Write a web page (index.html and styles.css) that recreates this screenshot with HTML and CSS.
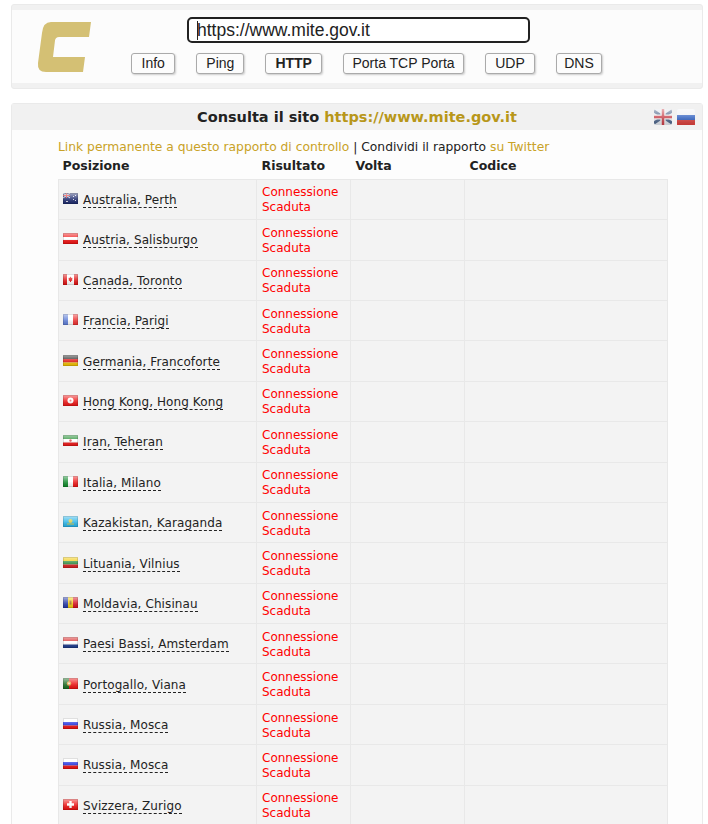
FILE: index.html
```html
<!DOCTYPE html>
<html lang="it">
<head>
  <meta charset="UTF-8">
  <meta name="viewport" content="width=device-width, initial-scale=1.0">
  <title>Consulta il sito https://www.mite.gov.it</title>
  <link rel="stylesheet" href="styles.css">
</head>
<body>
  <svg class="defs" width="0" height="0">
    <defs>
      <symbol id="f-au" viewBox="0 0 15 11"><rect width="15" height="11" fill="#1d2a6e"/><path d="M0 0l7 5M7 0L0 5" stroke="#d8dcec" stroke-width="1"/><path d="M3.500 0v5M0 2.500h7" stroke="#d33" stroke-width="1"/><path d="M10 3h1v1h-1zM12 2h1v1h-1zM12 7h1v1h-1zM10 6h1v1h-1zM3 8h2v1H3z" fill="#dde"/></symbol>
      <symbol id="f-at" viewBox="0 0 15 11"><rect width="15" height="11" fill="#f01010"/><rect y="4" width="15" height="3" fill="#fff"/></symbol>
      <symbol id="f-ca" viewBox="0 0 15 11"><rect width="15" height="11" fill="#fff"/><rect width="4" height="11" fill="#e01010"/><rect x="11" width="4" height="11" fill="#e01010"/><path d="M7.500 2.500l1 1.500 1-.3-.4 2 .6.400-1.700 1.100v.8h-1v-.8L5.300 6.100l.6-.4-.4-2 1 .3z" fill="#e01010"/></symbol>
      <symbol id="f-fr" viewBox="0 0 15 11"><rect width="15" height="11" fill="#fff"/><rect width="5" height="11" fill="#5f7fd8"/><rect x="10" width="5" height="11" fill="#ee3030"/></symbol>
      <symbol id="f-de" viewBox="0 0 15 11"><rect width="15" height="4" fill="#222"/><rect y="4" width="15" height="3.500" fill="#e01010"/><rect y="7.500" width="15" height="3.500" fill="#f2c200"/></symbol>
      <symbol id="f-hk" viewBox="0 0 15 11"><rect width="15" height="11" fill="#ee1515"/><circle cx="7.500" cy="5.500" r="3" fill="#fff"/><circle cx="7.500" cy="5.500" r="1" fill="#e66"/></symbol>
      <symbol id="f-ir" viewBox="0 0 15 11"><rect width="15" height="4" fill="#1a8a2a"/><rect y="4" width="15" height="3.500" fill="#fff"/><rect y="7.500" width="15" height="3.500" fill="#ee1515"/><circle cx="7.500" cy="5.500" r="1.200" fill="#d44"/></symbol>
      <symbol id="f-it" viewBox="0 0 15 11"><rect width="15" height="11" fill="#fff"/><rect width="5" height="11" fill="#0f8a2a"/><rect x="10" width="5" height="11" fill="#ee1515"/></symbol>
      <symbol id="f-kz" viewBox="0 0 15 11"><rect width="15" height="11" fill="#28b4e8"/><circle cx="7.500" cy="5" r="2" fill="#d8c840"/><path d="M4 7.500h7v1H4z" fill="#d8c840"/></symbol>
      <symbol id="f-lt" viewBox="0 0 15 11"><rect width="15" height="4" fill="#f2c800"/><rect y="4" width="15" height="3.500" fill="#2a8a3a"/><rect y="7.500" width="15" height="3.500" fill="#d82020"/></symbol>
      <symbol id="f-md" viewBox="0 0 15 11"><rect width="15" height="11" fill="#f2cc10"/><rect width="5" height="11" fill="#2438a8"/><rect x="10" width="5" height="11" fill="#d81020"/><rect x="6.500" y="3.500" width="2" height="4" fill="#a06a20"/></symbol>
      <symbol id="f-nl" viewBox="0 0 15 11"><rect width="15" height="4" fill="#d82020"/><rect y="4" width="15" height="3.500" fill="#fff"/><rect y="7.500" width="15" height="3.500" fill="#1c3a8c"/></symbol>
      <symbol id="f-pt" viewBox="0 0 15 11"><rect width="15" height="11" fill="#ee1010"/><rect width="6" height="11" fill="#1a6a20"/><circle cx="6" cy="5.500" r="2.200" fill="#e0a040"/><circle cx="6" cy="5.500" r="1" fill="#e8e0d0"/></symbol>
      <symbol id="f-ru" viewBox="0 0 15 11"><rect width="15" height="4" fill="#fff"/><rect y="4" width="15" height="3.500" fill="#2030e0"/><rect y="7.500" width="15" height="3.500" fill="#ee1010"/></symbol>
      <symbol id="f-ch" viewBox="0 0 15 11"><rect width="15" height="11" fill="#ee1010"/><path d="M6.300 2h2.400v2.300H11v2.400H8.700V9H6.300V6.700H4V4.300h2.300z" fill="#fff"/></symbol>
      <linearGradient id="gloss" x1="0" y1="0" x2="0" y2="1">
        <stop offset="0" stop-color="#fff" stop-opacity=".6"/>
        <stop offset=".5" stop-color="#fff" stop-opacity=".2"/>
        <stop offset="1" stop-color="#000" stop-opacity=".1"/>
      </linearGradient>
      <symbol id="sheen" viewBox="0 0 15 11"><rect width="15" height="11" fill="url(#gloss)"/><rect x=".5" y=".5" width="14" height="10" fill="none" stroke="#000" stroke-opacity=".12"/></symbol>
    </defs>
  </svg>

  <header class="top-box">
    <div class="top-inner">
      <svg class="logo" width="54" height="50" viewBox="0 0 54 50">
        <path d="M14 0H54L52 15H22Q18.500 15 18 18.500L16 35H48L46 50H9Q0 50 1 41L5 11Q6 0 14 0Z" fill="#d4c074"/>
      </svg>
      <div class="top-controls">
        <input class="url-input" type="text" value="https://www.mite.gov.it">
        <nav class="tool-buttons">
          <button class="b-info">Info</button>
          <button>Ping</button>
          <button class="active">HTTP</button>
          <button class="b-tcp">Porta TCP Porta</button>
          <button>UDP</button>
          <button class="b-dns">DNS</button>
        </nav>
      </div>
    </div>
  </header>

  <section class="report">
    <div class="report-head">
      <h1>Consulta il sito <a href="#">https://www.mite.gov.it</a></h1>
      <div class="langs">
        <svg width="18" height="16" viewBox="0 0 18 16"><rect width="18" height="16" rx="2" fill="#dfe3ea"/><path d="M0 2l18 12M18 2L0 14" stroke="#4a6288" stroke-width="3"/><path d="M9 0v16M0 8h18" stroke="#eee" stroke-width="5"/><path d="M9 0v16M0 8h18" stroke="#c8404a" stroke-width="2.500"/><rect width="18" height="16" rx="2" fill="url(#gloss)"/></svg>
        <svg width="18" height="16" viewBox="0 0 18 16"><rect width="18" height="6" fill="#eef0f4"/><rect y="6" width="18" height="5" fill="#2f5fc0"/><rect y="11" width="18" height="5" fill="#d8403c"/><rect width="18" height="16" rx="2" fill="url(#gloss)"/></svg>
      </div>
    </div>
    <div class="report-body">
      <p class="share"><a href="#">Link permanente a questo rapporto di controllo</a> | Condividi il rapporto <a href="#">su Twitter</a></p>
      <table class="results">
        <thead>
          <tr><th class="c-pos">Posizione</th><th class="c-res">Risultato</th><th class="c-time">Volta</th><th>Codice</th></tr>
        </thead>
        <tbody>
          <tr><td class="loc"><svg class="flag"><use href="#f-au"/><use href="#sheen"/></svg><span class="place">Australia, Perth</span></td><td class="err">Connessione Scaduta</td><td></td><td></td></tr>
          <tr><td class="loc"><svg class="flag"><use href="#f-at"/><use href="#sheen"/></svg><span class="place">Austria, Salisburgo</span></td><td class="err">Connessione Scaduta</td><td></td><td></td></tr>
          <tr><td class="loc"><svg class="flag"><use href="#f-ca"/><use href="#sheen"/></svg><span class="place">Canada, Toronto</span></td><td class="err">Connessione Scaduta</td><td></td><td></td></tr>
          <tr><td class="loc"><svg class="flag"><use href="#f-fr"/><use href="#sheen"/></svg><span class="place">Francia, Parigi</span></td><td class="err">Connessione Scaduta</td><td></td><td></td></tr>
          <tr><td class="loc"><svg class="flag"><use href="#f-de"/><use href="#sheen"/></svg><span class="place">Germania, Francoforte</span></td><td class="err">Connessione Scaduta</td><td></td><td></td></tr>
          <tr><td class="loc"><svg class="flag"><use href="#f-hk"/><use href="#sheen"/></svg><span class="place">Hong Kong, Hong Kong</span></td><td class="err">Connessione Scaduta</td><td></td><td></td></tr>
          <tr><td class="loc"><svg class="flag"><use href="#f-ir"/><use href="#sheen"/></svg><span class="place">Iran, Teheran</span></td><td class="err">Connessione Scaduta</td><td></td><td></td></tr>
          <tr><td class="loc"><svg class="flag"><use href="#f-it"/><use href="#sheen"/></svg><span class="place">Italia, Milano</span></td><td class="err">Connessione Scaduta</td><td></td><td></td></tr>
          <tr><td class="loc"><svg class="flag"><use href="#f-kz"/><use href="#sheen"/></svg><span class="place">Kazakistan, Karaganda</span></td><td class="err">Connessione Scaduta</td><td></td><td></td></tr>
          <tr><td class="loc"><svg class="flag"><use href="#f-lt"/><use href="#sheen"/></svg><span class="place">Lituania, Vilnius</span></td><td class="err">Connessione Scaduta</td><td></td><td></td></tr>
          <tr><td class="loc"><svg class="flag"><use href="#f-md"/><use href="#sheen"/></svg><span class="place">Moldavia, Chisinau</span></td><td class="err">Connessione Scaduta</td><td></td><td></td></tr>
          <tr><td class="loc"><svg class="flag"><use href="#f-nl"/><use href="#sheen"/></svg><span class="place">Paesi Bassi, Amsterdam</span></td><td class="err">Connessione Scaduta</td><td></td><td></td></tr>
          <tr><td class="loc"><svg class="flag"><use href="#f-pt"/><use href="#sheen"/></svg><span class="place">Portogallo, Viana</span></td><td class="err">Connessione Scaduta</td><td></td><td></td></tr>
          <tr><td class="loc"><svg class="flag"><use href="#f-ru"/><use href="#sheen"/></svg><span class="place">Russia, Mosca</span></td><td class="err">Connessione Scaduta</td><td></td><td></td></tr>
          <tr><td class="loc"><svg class="flag"><use href="#f-ru"/><use href="#sheen"/></svg><span class="place">Russia, Mosca</span></td><td class="err">Connessione Scaduta</td><td></td><td></td></tr>
          <tr><td class="loc"><svg class="flag"><use href="#f-ch"/><use href="#sheen"/></svg><span class="place">Svizzera, Zurigo</span></td><td class="err">Connessione Scaduta</td><td></td><td></td></tr>
        </tbody>
      </table>
    </div>
  </section>
</body>
</html>
```

FILE: styles.css
```css
html {
  height: 824px;
  overflow: hidden;
}
body {
  margin: 0;
  padding: 4px 5px 0 11px;
  font-family: "DejaVu Sans", Verdana, sans-serif;
  font-size: 12px;
  color: #222;
  background: #fff;
}
a {
  color: #c9a227;
  text-decoration: none;
}
.defs {
  position: absolute;
}
.top-box {
  background: #f1f1f1;
  border: 1px solid #eaeaea;
  border-radius: 3px;
  padding: 5px 0;
  margin-bottom: 14px;
}
.top-inner {
  display: flex;
  height: 73px;
  background: #fcfcfc;
}
.logo {
  margin: 12px 0 0 25px;
}
.top-controls {
  margin: 7px 0 0 40px;
}
.url-input {
  display: block;
  box-sizing: border-box;
  width: 343px;
  height: 26px;
  margin: 0 0 10px 56px;
  padding: 0 8px;
  border: 2px solid #222;
  border-radius: 5px;
  outline: none;
  font-family: "Liberation Sans", Arial, sans-serif;
  font-size: 17.500px;
  color: #222;
  background: #fff linear-gradient(#222, #222) no-repeat 8px center / 1px 19px;
}
.tool-buttons {
  display: flex;
  gap: 21px;
}
.tool-buttons button {
  height: 21px;
  padding: 0 9px 2px;
  border: 1px solid #aaa;
  border-radius: 3px;
  background: #fcfcfc;
  box-shadow: 1px 1px 2px #ccc;
  font-family: "Liberation Sans", Arial, sans-serif;
  font-size: 14px;
  color: #222;
}
.tool-buttons .active {
  font-weight: bold;
}
.tool-buttons .b-info {
  padding: 0 9.500px 2px;
}
.tool-buttons .b-tcp {
  padding: 0 8.500px 2px;
}
.tool-buttons .b-dns {
  padding: 0 7.500px 2px;
}
.report {
  border: 1px solid #eaeaea;
  border-radius: 3px;
  background: #fdfdfd;
}
.report-head {
  display: flex;
  align-items: center;
  justify-content: center;
  position: relative;
  height: 26px;
  background: #f1f1f1;
}
.report-head h1 {
  margin: 0;
  font-size: 14.500px;
  font-weight: bold;
  color: #222;
}
.report-head h1 a {
  color: #b8971a;
}
.langs {
  position: absolute;
  right: 7px;
  top: 5px;
  display: flex;
  gap: 5px;
}
.report-body {
  padding: 0 35px 0 46px;
}
.share {
  margin: 10px 0 0;
  font-size: 12.300px;
  line-height: 15px;
}
.results {
  width: 610px;
  border-collapse: collapse;
  table-layout: fixed;
}
.results th {
  height: 21.800px;
  padding: 0 5px 2px;
  font-size: 12.500px;
  text-align: left;
}
.results .c-pos {
  width: 189px;
  padding-left: 4px;
}
.c-res {
  width: 84px;
}
.c-time {
  width: 104px;
}
.results td {
  height: 40.400px;
  box-sizing: border-box;
  padding: 0 5px;
  border: 1px solid #e8e8e8;
  background: #f3f3f3;
  line-height: 15px;
  vertical-align: middle;
}
.results .loc {
  padding: 2px 5px 0 4px;
}
.results .err {
  padding-top: 2px;
  color: #f00;
}
.flag {
  width: 15px;
  height: 11px;
  margin-right: 5px;
  vertical-align: 0;
}
.place {
  border-bottom: 1px dashed #222;
  letter-spacing: .1px;
}
```
